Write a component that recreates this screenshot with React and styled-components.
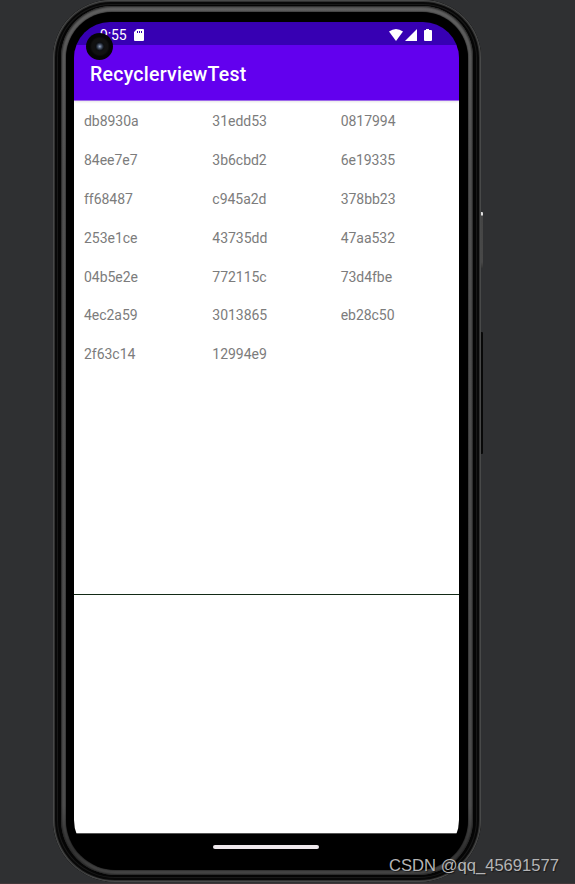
import React from 'react'
import styled, { createGlobalStyle } from "styled-components"


const GlobalStyle = createGlobalStyle`
    body {
        margin: 0;
        overflow: hidden;
        background-color: #2f3032;
    }
    * {
        box-sizing: border-box;
    }
`

const Page = styled.div`
    position: relative;
    width: 575px;
    height: 884px;
    padding-left: 53px;
    background-color: #2f3032;
    border-bottom: 1px solid #403638;
    overflow: hidden;
    font-family: Roboto, "Liberation Sans", sans-serif;
`

const Phone = styled.div`
    position: relative;
    width: 428px;
    height: 882px;
    padding: 6px 8px 7px;
    border-radius: 58px 58px 62px 62px;
    background-color: #050505;
    box-shadow: inset 0 0 0 1px #484949, inset 0 0 0 2px #303030,
        inset 0 0 0 4px #080808, inset 0 0 0 5px #181818;
`

const Band = styled.div`
    height: 100%;
    padding: 6px 5px 5px;
    border-radius: 51px 51px 55px 55px;
    background: linear-gradient(#606060, #545454 20%, #505050 92%, #333 97%, #484848);
    box-shadow: inset 0 0 2px 1px #222;
`

const Bezel = styled.div`
    height: 100%;
    padding: 10px 9px 12px 8px;
    border-radius: 46px 46px 50px 50px;
    background-color: #000;
    box-shadow: 0 0 2px #000;
`

const Screen = styled.div`
    position: relative;
    display: flex;
    flex-direction: column;
    width: 385px;
    height: 840px;
    border-radius: 36px 36px 42px 42px;
    background-color: #000;
    overflow: hidden;
`

const StatusBar = styled.div`
    display: flex;
    align-items: center;
    flex: 0 0 23px;
    padding: 3px 25px 0 26px;
    color: #fff;
    font-size: 14px;
    background-color: #3700b3;
`

const Clock = styled.span`
    width: 33px;
    white-space: nowrap;
    letter-spacing: -0.1px;
`

const StatusIcons = styled.div`
    display: flex;
    margin-left: auto;
`

const AppBar = styled.div`
    position: relative;
    z-index: 1;
    display: flex;
    align-items: center;
    flex: 0 0 55px;
    padding: 3px 16px 0;
    color: #fff;
    font-size: 19.5px;
    font-weight: 500;
    letter-spacing: 0.25px;
    background-color: #6200ee;
    box-shadow: 0 1px 0 rgba(98,0,238,0.55), 0 2px 2px rgba(0,0,0,0.1);
`

const List = styled.div`
    display: grid;
    grid-template-columns: repeat(3, 1fr);
    grid-auto-rows: 38.9px;
    align-content: start;
    flex: 0 0 494px;
    padding-top: 1px;
    background-color: #fff;
`

const Item = styled.div`
    padding-left: 10px;
    color: #7c7c7c;
    font-size: 14px;
    line-height: 40.6px;
    letter-spacing: -0.03px;
`

const Divider = styled.div`
    flex: 0 0 1px;
    background-color: #132a16;
`

const Content = styled.div`
    flex: 1;
    background-color: #fff;
`

const NavBar = styled.div`
    display: flex;
    justify-content: center;
    flex: 0 0 29px;
    padding: 11px 1px 0 0;
    background-color: #000;
    border-top: 1px solid #555;
`

const Handle = styled.div`
    width: 106px;
    height: 4px;
    border-radius: 2px;
    background-color: #eee8ec;
`

const Camera = styled.div`
    position: absolute;
    z-index: 2;
    left: 33px;
    top: 33px;
    width: 27px;
    height: 27px;
    border-radius: 50%;
    background: radial-gradient(circle at 51% 50%, #a3adbd 0, #53627b 1.5px, #262d39 3px, #0c0e12 4.2px, #111 5.5px, #111 8px, #050505 10px);
`

const SideButton = styled.div`
    position: absolute;
    left: 481px;
    top: ${(props) => props.$top}px;
    width: 2px;
    height: ${(props) => props.$height}px;
    border-radius: 0 1px 1px 0;
    background: ${(props) => props.$color};
`

const Watermark = styled.div`
    position: absolute;
    left: 389px;
    top: 856px;
    color: #b5b5b6;
    font-family: "Liberation Sans", sans-serif;
    font-size: 16.6px;
    line-height: 20px;
    white-space: nowrap;
    text-shadow: 1px 1px 1px rgba(0,0,0,0.5);
`

const items = [
    'db8930a', '31edd53', '0817994',
    '84ee7e7', '3b6cbd2', '6e19335',
    'ff68487', 'c945a2d', '378bb23',
    '253e1ce', '43735dd', '47aa532',
    '04b5e2e', '772115c', '73d4fbe',
    '4ec2a59', '3013865', 'eb28c50',
    '2f63c14', '12994e9',
]

const SdCard = () => (
    <svg width="12" height="14" viewBox="0 0 12 14">
        <path fill="#fff" fillRule="evenodd" d="M4 1h6q1 0 1 1v10q0 1-1 1H2q-1 0-1-1V4zM4 3v2h1V3zM6 3v2h1V3zM8 3v2h1V3z" />
    </svg>
)

const Signals = () => (
    <svg width="46" height="14" viewBox="0 0 46 14">
        <path fill="#fff" d="M1 3.5Q8 -1.5 15 3.5L8 13z" />
        <path fill="#fff" d="M29 1v12H17z" />
        <path fill="#fff" d="M38 1h3v1h2q1 0 1 1v9q0 1-1 1h-6q-1 0-1-1V3q0-1 1-1h1z" />
    </svg>
)

const App = () => {
  return (
    <Page>
        <GlobalStyle/>
        <Phone>
            <Band>
                <Bezel>
                    <Screen>
                        <StatusBar>
                            <Clock>9:55</Clock>
                            <SdCard/>
                            <StatusIcons>
                                <Signals/>
                            </StatusIcons>
                        </StatusBar>
                        <AppBar>RecyclerviewTest</AppBar>
                        <List>
                            {items.map((item) => (
                                <Item key={item}>{item}</Item>
                            ))}
                        </List>
                        <Divider/>
                        <Content/>
                        <NavBar>
                            <Handle/>
                        </NavBar>
                    </Screen>
                </Bezel>
            </Band>
            <Camera/>
        </Phone>
        <SideButton $top={212} $height={56} $color="linear-gradient(#ddd 3px, #454545 4px, #484848 50px, #333)"/>
        <SideButton $top={332} $height={122} $color="#080808"/>
        <Watermark>CSDN @qq_45691577</Watermark>
    </Page>
  )
}

export default App
